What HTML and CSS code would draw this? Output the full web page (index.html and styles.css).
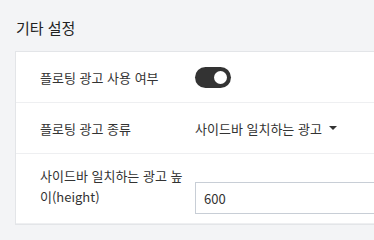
FILE: index.html
```html
<!DOCTYPE html>
<html lang="ko">
<head>
<meta charset="utf-8">
<link rel="stylesheet" href="styles.css">
</head>
<body>
<div class="page">
  <h2 class="title">기타 설정</h2>
  <div class="card">
    <div class="row">
      <div class="label">플로팅 광고 사용 여부</div>
      <div class="value">
        <span class="toggle"><span class="knob"></span></span>
      </div>
    </div>
    <div class="row">
      <div class="label">플로팅 광고 종류</div>
      <div class="value">
        <span class="select">사이드바 일치하는 광고<span class="caret"></span></span>
      </div>
    </div>
    <div class="row tall">
      <div class="label">사이드바 일치하는 광고 높이(height)</div>
      <div class="value">
        <input class="input" type="text" value="600">
      </div>
    </div>
  </div>
</div>
</body>
</html>
```
FILE: styles.css
```css
html, body {
  margin: 0;
  padding: 0;
  background: #f3f4f6;
  overflow: hidden;
}
body {
  font-family: "Noto Sans CJK KR", "Noto Sans", sans-serif;
  color: #333;
}
.page {
  padding: 16px 0 0 15px;
}
.title {
  margin: 0 0 0 1px;
  font-size: 15px;
  font-weight: 400;
  line-height: 24px;
  height: 35px;
  color: #222;
}
.card {
  background: #fff;
  border: 1px solid #e3e5e8;
  border-right: none;
}
.row {
  display: flex;
  align-items: center;
  height: 50px;
  border-bottom: 1px solid #eeeff1;
  padding-left: 24px;
  font-size: 13px;
}
.row.tall {
  height: 69px;
}
.label {
  width: 143px;
  line-height: 21px;
  flex: none;
}
.row.tall .label {
  margin-bottom: 5px;
}
.value {
  margin-left: 12px;
  flex: 1;
  display: flex;
  align-items: center;
}
.toggle {
  width: 36px;
  height: 21px;
  border-radius: 11px;
  background: #333;
  position: relative;
  display: inline-block;
}
.knob {
  position: absolute;
  right: 4px;
  top: 4px;
  width: 13px;
  height: 13px;
  border-radius: 50%;
  background: #fff;
}
.select {
  display: inline-flex;
  align-items: center;
}
.caret {
  margin-left: 7px;
  width: 0;
  height: 0;
  border-left: 4px solid transparent;
  border-right: 4px solid transparent;
  border-top: 4px solid #333;
}
.input {
  flex: 1;
  min-width: 0;
  height: 32px;
  box-sizing: border-box;
  border: 1px solid #c8ced6;
  border-right: none;
  padding: 0 8px;
  font-family: inherit;
  font-size: 13px;
  color: #333;
  outline: none;
  margin-top: 19px;
}
```
